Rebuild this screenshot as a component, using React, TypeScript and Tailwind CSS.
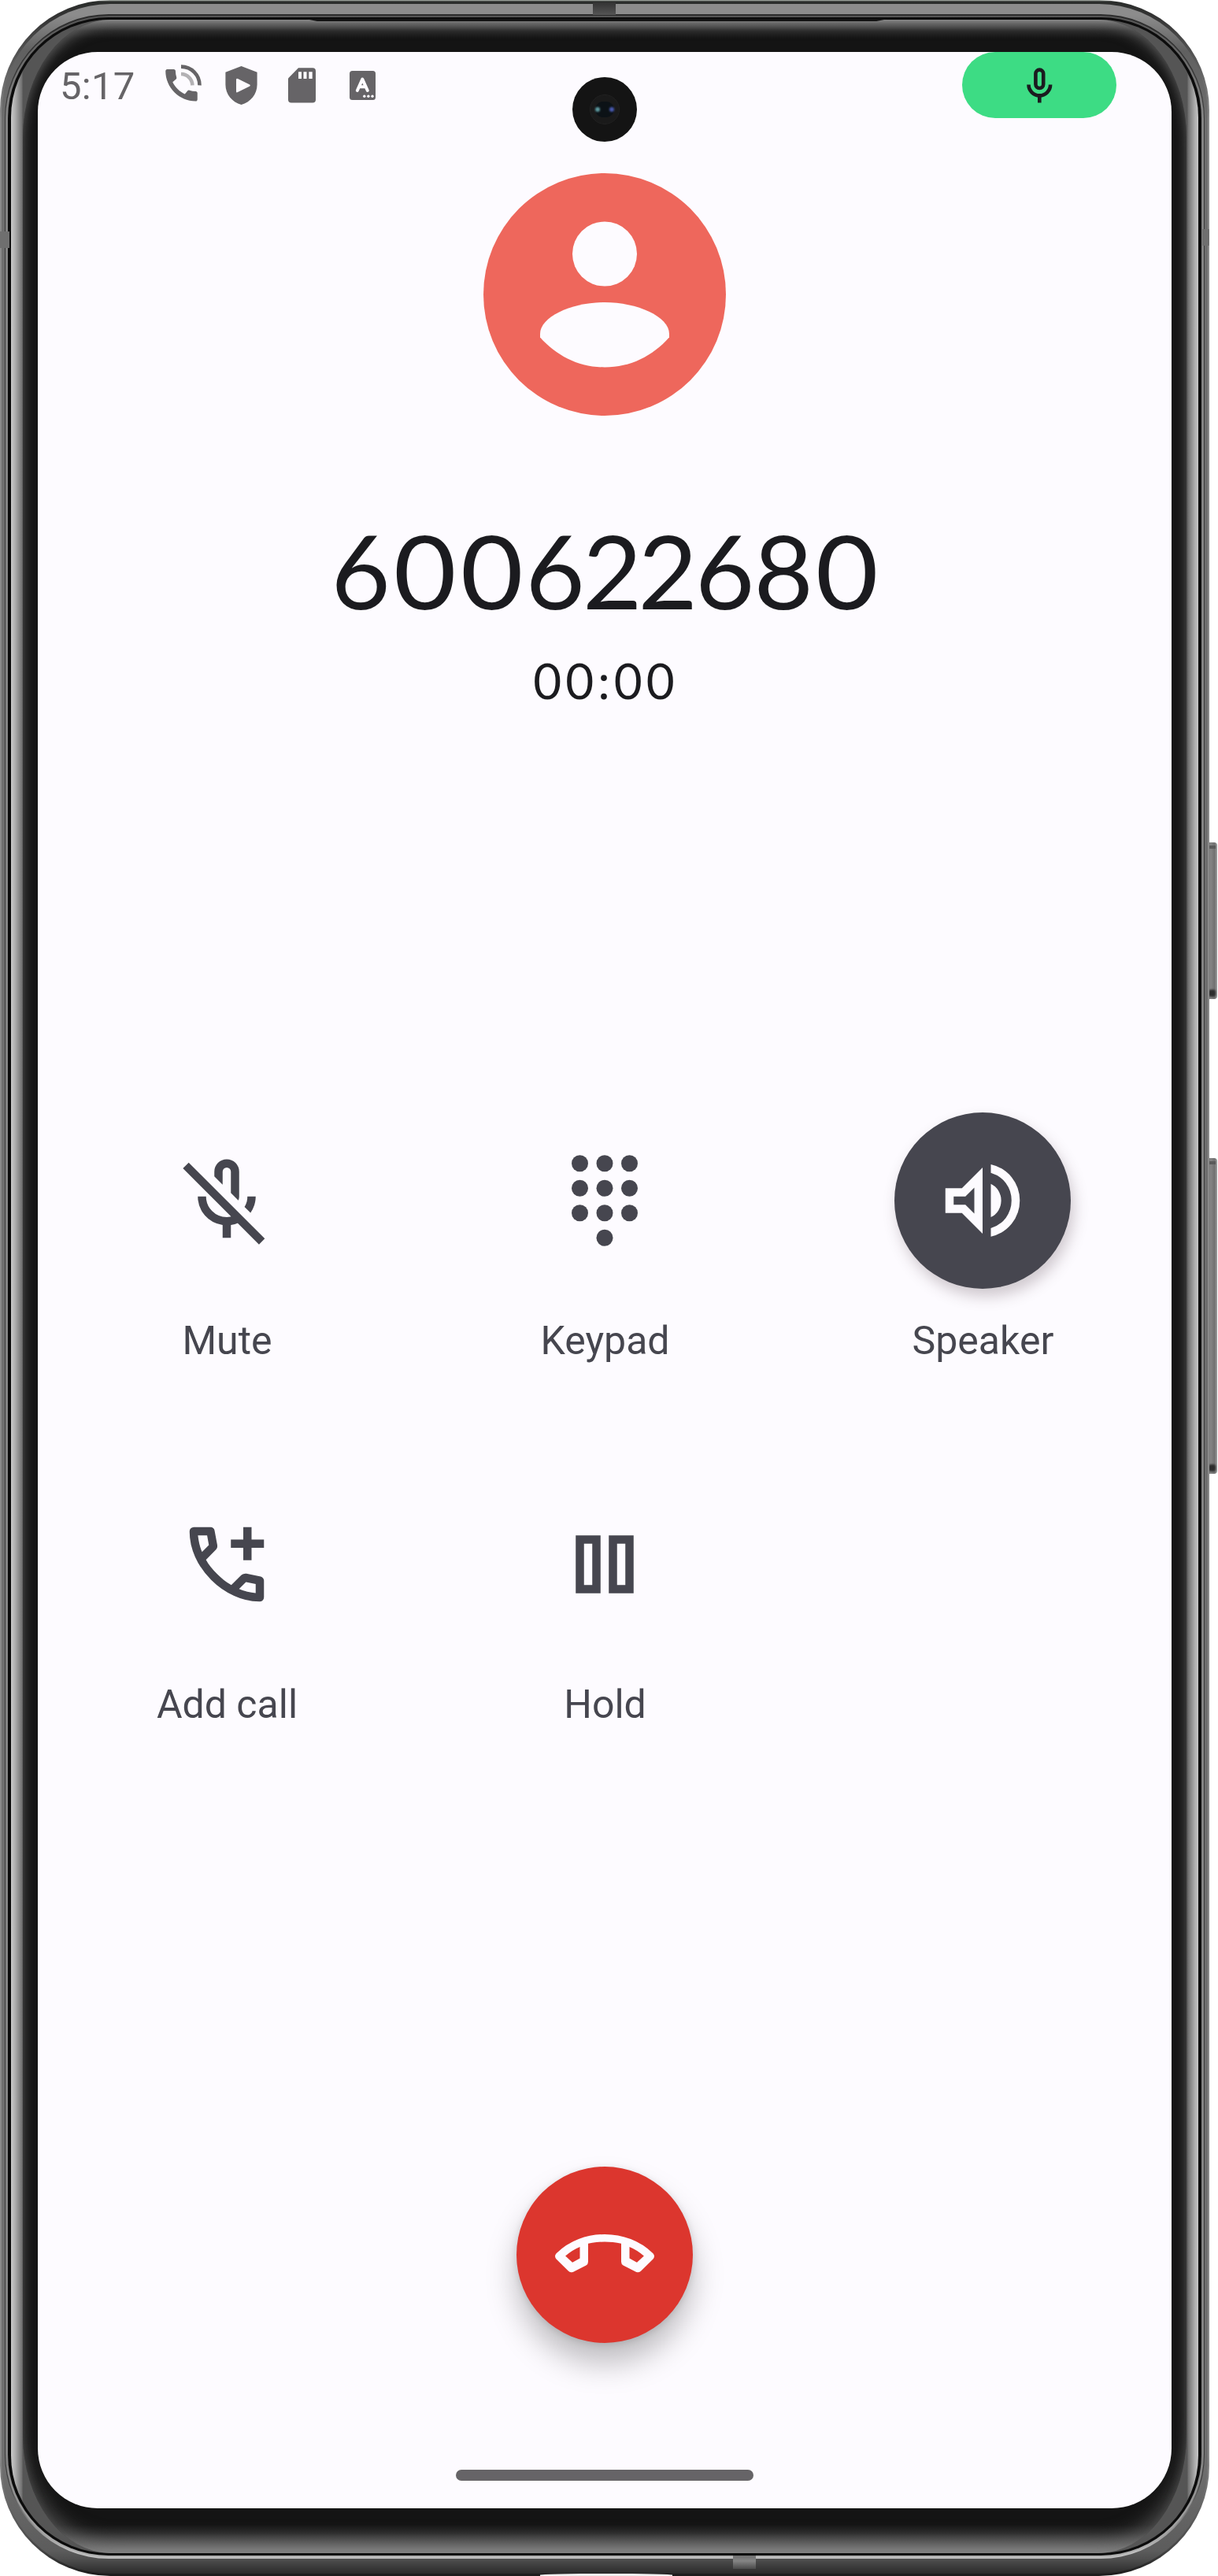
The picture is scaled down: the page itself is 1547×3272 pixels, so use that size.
import type { ReactNode } from "react";

/* ---------- status bar icons ---------- */

function OngoingCallIcon() {
  return (
    <svg className="h-[48px] w-[50px]" viewBox="0 0 50 48">
      <g transform="translate(-5.5 -.7) scale(2.25)" fill="#666467">
        <path d="M20.01 15.38c-1.23 0-2.42-.2-3.53-.56-.35-.12-.74-.03-1.01.24l-1.57 1.97c-2.83-1.35-5.48-3.9-6.89-6.83l1.95-1.66c.27-.28.35-.67.24-1.02-.37-1.11-.56-2.3-.56-3.53 0-.54-.45-.99-.99-.99H4.19C3.65 3 3 3.24 3 3.99 3 13.28 10.73 21 20.01 21c.71 0 .99-.63.99-1.18v-3.45c0-.54-.45-.99-.99-.99z" />
      </g>
      <path d="M21 2.6A23.5 23.5 0 0 1 44.5 26.4" fill="none" stroke="#666467" strokeWidth="4.6" />
      <path d="M21 12A14.6 14.6 0 0 1 35.4 26.4" fill="none" stroke="#b3b1b4" strokeWidth="4.6" />
    </svg>
  );
}

function ShieldPlayIcon() {
  return (
    <svg className="h-[49px] w-[41px]" viewBox="0 0 41 49" fill="#666467">
      <path
        fillRule="evenodd"
        d="M20.5 0L40.6 7.8V23.5C40.6 36 32 45.8 20.5 49C9 45.8.4 36 .4 23.5V7.8ZM14 17.2V32Q14 34.3 16 33.1L31.2 25.4Q32.6 24.5 31.2 23.6L16 16Q14 15 14 17.2Z"
      />
    </svg>
  );
}

function SdCardIcon() {
  return (
    <svg className="h-[45px] w-[35px]" viewBox="0 0 35 45">
      <path d="M13 .3H31Q35 .3 35 4.3V40.5Q35 44.5 31 44.5H4Q0 44.5 0 40.5V13.5Z" fill="#666467" />
      <path d="M13 5.3h4v8.7h-4zM19.5 5.3h4v8.7h-4zM26.3 5.3h4.4v8.7h-4.4z" fill="#fdfbff" />
    </svg>
  );
}

function LanguageIcon() {
  return (
    <svg className="h-[37px] w-[33px]" viewBox="0 0 33 37">
      <rect width="33" height="37" rx="3.5" fill="#666467" />
      <path
        d="M9.8 25L16.3 10.6L22.8 25M12.5 20.3H20"
        fill="none"
        stroke="#fdfbff"
        strokeWidth="4"
        strokeLinecap="round"
        strokeLinejoin="round"
      />
      <g fill="#fdfbff">
        <circle cx="18.8" cy="32.3" r="1.7" />
        <circle cx="23.9" cy="32.3" r="1.7" />
        <circle cx="29" cy="32.3" r="1.7" />
      </g>
    </svg>
  );
}

function MicIcon() {
  return (
    <svg className="h-[45px] w-[33px]" viewBox="0 0 33 45" fill="none" stroke="#1b1b1f" strokeWidth="4.6">
      <rect x="11.4" y="2.6" width="9.8" height="23.4" rx="4.9" />
      <path d="M2.5 21.5A13.8 13.8 0 0 0 30.1 21.5" />
      <path d="M16.3 35V44.6" />
    </svg>
  );
}

/* ---------- call control icons (24 unit grid) ---------- */

function Icon({ children }: { children: ReactNode }) {
  return (
    <svg className="size-[126px]" viewBox="0 0 24 24" fill="currentColor">
      {children}
    </svg>
  );
}

const MuteIcon = () => (
  <Icon>
    <path d="m17.75 14.95-1.45-1.45q.35-.525.525-1.163Q17 11.7 17 11h2q0 1.1-.325 2.087-.325.988-.925 1.863Zm-2.95-3L13 10.15V5q0-.425-.287-.713Q12.425 4 12 4t-.712.287Q11 4.575 11 5v3.15l-2-2V5q0-1.25.875-2.125T12 2q1.25 0 2.125.875T15 5v6q0 .275-.062.512-.063.238-.138.438ZM11 21v-3.1q-2.6-.35-4.3-2.312Q5 13.625 5 11h2q0 2.075 1.463 3.537Q9.925 16 12 16q.85 0 1.613-.262.762-.263 1.387-.738l1.425 1.425q-.725.575-1.587.962-.863.388-1.838.513V21Zm8.8 1.6L1.4 4.2l1.4-1.4 18.4 18.4Z" />
  </Icon>
);

const KeypadIcon = () => (
  <Icon>
    {[3, 9, 15].map((y) => [6, 12, 18].map((x) => <circle key={`${x}-${y}`} cx={x} cy={y} r="2" />))}
    <circle cx="12" cy="21" r="2" />
  </Icon>
);

const SpeakerIcon = () => (
  <Icon>
    <path d="M14 20.725v-2.05q2.25-.65 3.625-2.5t1.375-4.2q0-2.35-1.375-4.2T14 5.275v-2.05q3.1.7 5.05 3.138Q21 8.8 21 11.975t-1.95 5.613Q17.1 20.025 14 20.725Zm0-4.725V7.95q1.175.55 1.838 1.65.662 1.1.662 2.4 0 1.275-.662 2.362Q15.175 15.45 14 16Z" />
    <path fillRule="evenodd" d="M3 15V9h4l5-5v16l-5-5ZM10 8.85 7.85 11H5v2h2.85L10 15.15Z" />
  </Icon>
);

const AddCallIcon = () => (
  <Icon>
    <path d="M16 11V8h-3V6h3V3h2v3h3v2h-3v3Z" />
    <path
      fillRule="evenodd"
      d="M19.95 21q-3.125 0-6.175-1.363-3.05-1.362-5.55-3.862-2.5-2.5-3.863-5.55Q3 7.175 3 4.05q0-.45.3-.75t.75-.3H8.1q.35 0 .625.238.275.237.325.562l.65 3.5q.05.4-.025.675-.075.275-.275.475L6.975 10.9q.5.925 1.187 1.787.688.863 1.513 1.663.775.775 1.625 1.438.85.662 1.8 1.212l2.35-2.35q.225-.225.588-.338.362-.112.712-.062l3.45.7q.35.1.575.363.225.262.225.587v4.05q0 .45-.3.75t-.75.3ZM6.025 9l1.65-1.65L7.25 5H5.025q.125 1.025.35 2.025.225 1 .65 1.975Zm8.95 8.95q.975.425 1.988.675 1.012.25 2.037.325v-2.2l-2.35-.475Z"
    />
  </Icon>
);

const HoldIcon = () => (
  <Icon>
    <path fillRule="evenodd" d="M5 5h6v14H5ZM7 7v10h2V7ZM13 5h6v14h-6ZM15 7v10h2V7Z" />
  </Icon>
);

const EndCallIcon = () => (
  <Icon>
    <path
      fillRule="evenodd"
      d="M12 7.05Q15.3 7.05 18.3 8.2T23.7 11.65Q24 11.95 24 12.35T23.7 13.05L20.8 15.9Q20.5 16.2 20.1 16.22T19.4 16.05L16.5 14.55Q16 14.25 16 13.7V9.3Q15 9.05 14 8.95T12 8.85T10 8.95T8 9.3V13.7Q8 14.25 7.5 14.55L4.6 16.05Q4.3 16.25 3.9 16.22T3.2 15.9L.3 13.05Q0 12.75 0 12.35T.3 11.65Q2.7 9.35 5.7 8.2T12 7.05ZM18 10.1V12.85L19.8 13.85L21.5 12.3Q20.7 11.6 19.85 11.05T18 10.1ZM6 10.1Q5 10.5 4.15 11.05T2.5 12.3L4.2 13.85L6 12.85Z"
    />
  </Icon>
);

function Avatar() {
  return (
    <svg className="size-[308px]" viewBox="0 0 308 308">
      <circle cx="154" cy="154" r="154" fill="#ee675c" />
      <circle cx="154" cy="102.5" r="41" fill="#fdfbff" />
      <path
        d="M72 208.5V204C72 182 113 164 154 164S236 182 236 204V208.5C215 232 187 246.5 154 246.5S93 232 72 208.5Z"
        fill="#fdfbff"
      />
    </svg>
  );
}

function Control({ icon, label, active }: { icon: ReactNode; label: string; active?: boolean }) {
  return (
    <button className="flex flex-col items-center">
      <span
        className={
          active
            ? "flex size-[224px] items-center justify-center rounded-full bg-[#46464f] text-[#fdfbff] shadow-[4px_10px_18px_rgba(70,50,60,0.25)]"
            : "flex size-[224px] items-center justify-center rounded-full text-[#46464f]"
        }
      >
        {icon}
      </span>
      <span className="mt-9 pl-px text-[50px] leading-[60px] text-[#46464f]">{label}</span>
    </button>
  );
}

function Screen() {
  return (
    <main className="relative flex h-[3120px] w-[1440px] flex-col items-center overflow-hidden rounded-[76px] bg-[#fdfbff] font-['Roboto',sans-serif]">
      <header className="flex h-[84px] w-full items-start text-[#666467]">
        <span className="ml-[28px] mt-[15px] w-[96px] text-[49px] leading-[58px] tracking-[0.3px]">5:17</span>
        <span className="ml-[36.5px] mt-[15.5px]"><OngoingCallIcon /></span>
        <span className="ml-[27.5px] mt-[18px]"><ShieldPlayIcon /></span>
        <span className="ml-[39px] mt-[20px]"><SdCardIcon /></span>
        <span className="ml-[43px] mt-[24px]"><LanguageIcon /></span>
        <span className="ml-auto mr-[70px] flex h-[84px] w-[196px] items-center justify-center rounded-full bg-[#3ddc84]">
          <MicIcon />
        </span>
      </header>

      {/* front camera */}
      <div className="absolute left-[679px] top-[32px] flex size-[82px] items-center justify-center rounded-full bg-[#141414]">
        <div className="flex size-[38px] items-center justify-center rounded-full border border-[#222] bg-[#1a1a1a]">
          <div className="flex h-[20px] w-[24px] items-center justify-between rounded-full bg-[#0c1216]">
            <span className="size-[6px] rounded-full bg-[#5f9ba0] blur-[1px]" />
            <span className="size-[6px] rounded-full bg-[#4a5bb0] blur-[1px]" />
          </div>
        </div>
      </div>

      <div className="mt-[70px]"><Avatar /></div>

      <h1 className="mt-[118px] flex whitespace-nowrap pr-[2px] font-['Lato',sans-serif] text-[130px] leading-[156px] text-[#1b1b1f]">
        <span className="mr-[5.6px]">6</span>
        <span className="mr-[10.4px] scale-x-[1.06]">0</span>
        <span className="mr-[4.7px] scale-x-[1.06]">0</span>
        <span className="-mr-[2.8px]">6</span>
        <span className="-mr-[5px]">2</span>
        <span className="-mr-[3px]">2</span>
        <span className="-mr-[0.7px]">6</span>
        <span className="mr-[5px]">8</span>
        <span className="scale-x-[1.06]">0</span>
      </h1>
      <p className="mt-[25px] pl-[3px] font-['Lato',sans-serif] text-[62px] leading-[74px] tracking-[5px] text-[#1b1b1f]">00:00</p>

      <section className="mt-[512px] grid w-full grid-cols-3 gap-y-[142px]">
        <Control icon={<MuteIcon />} label="Mute" />
        <Control icon={<KeypadIcon />} label="Keypad" />
        <Control icon={<SpeakerIcon />} label="Speaker" active />
        <Control icon={<AddCallIcon />} label="Add call" />
        <Control icon={<HoldIcon />} label="Hold" />
      </section>

      <button className="mt-[557px] flex size-[224px] shrink-0 items-center justify-center rounded-full bg-[#dc362e] text-[#fdfbff] shadow-[0_26px_38px_rgba(0,0,0,0.25),0_2px_10px_rgba(0,0,0,0.12)]">
        <EndCallIcon />
      </button>
      <div className="mt-[161px] h-[14px] w-[378px] shrink-0 rounded-full bg-[#666467]" />
    </main>
  );
}

function SideKey({ className }: { className: string }) {
  return (
    <div
      className={`absolute left-[1533px] w-[13px] rounded-r-[4px] bg-[linear-gradient(to_right,#5a5a5a,#858585_35%,#707070_75%,#a0a0a0)] ${className}`}
    >
      <div className="absolute inset-x-[2px] top-[4px] h-[4px] bg-[#5a5a5a]" />
      <div className="absolute inset-x-[2px] bottom-[3px] h-[9px] rounded-[3px] bg-[#2c2c2c] blur-[1px]" />
    </div>
  );
}

export default function App() {
  return (
    <div className="relative h-[3272px] w-[1547px] overflow-hidden bg-white">
      <SideKey className="top-[1070px] h-[199px]" />
      <SideKey className="top-[1471px] h-[401px]" />

      {/* metal frame, built from nested rings */}
      <div className="relative h-[3272px] w-[1536px] rounded-[140px] bg-[linear-gradient(to_bottom,#b9c1b9_0,#2a2d2b_2px,#333_20px,#8a8a8a_150px,#8a8a8a_3120px,#444_3240px,#1c1c1c_3270px)] px-[2px] pb-[3px] pt-[5px]">
        <div className="h-full rounded-[138px] bg-[linear-gradient(to_bottom,#8c8c8c_0,#8c8c8c_14px,#606060_60px,#6e6e6e_150px,#6e6e6e_3130px,#5c5c5c_3235px,#505050_3245px,#2a2a2a_3264px)] px-[4px] pb-[19px] pt-[13px]">
          <div className="h-full rounded-[132px] bg-[linear-gradient(to_bottom,#2c2c2c_0,#3a3a3a_100px,#3a3a3a_3130px,#c0c0c0_3225px,#c0c0c0_100%)] px-[1px] pb-[2px] pt-[2px]">
            <div className="h-full rounded-[131px] bg-[linear-gradient(to_bottom,#555_0,#848484_120px,#848484_3110px,#b0b0b0_100%)] px-[3px] pb-[2px] pt-[2px]">
              <div className="h-full rounded-[128px] bg-[#0c0c0c] px-[4px] pb-[3px] pt-[3px]">
                <div className="h-full rounded-[124px] bg-[linear-gradient(to_right,#cacaca_0,#b0b0b0_5px,#707070_14px,#555_15px,#555_1494px,#707070_1495px,#b0b0b0_1504px,#cacaca_1509px)] px-[15px]">
                  <div className="h-full rounded-[112px/150px] bg-[linear-gradient(to_bottom,#808080_0,#505050_5px,#222_14px,#141414_24px,#141414_3182px,#262626_3192px,#505050_3205px,#808080_3217px)] pl-[19px] pt-[41px] shadow-[inset_0_12px_16px_-4px_rgba(140,140,140,0.55),inset_0_-20px_24px_-6px_rgba(130,130,130,0.55)]">
                    <Screen />
                  </div>
                </div>
              </div>
            </div>
          </div>
        </div>
      </div>

      {/* earpiece lip and antenna breaks */}
      <div className="absolute left-[388px] top-[24px] h-[3px] w-[740px] bg-[#141414] [clip-path:polygon(0_0,100%_0,98%_100%,2%_100%)]" />
      <div className="absolute left-[753px] top-[3px] h-[16px] w-[29px] bg-[linear-gradient(to_bottom,#333,#555)]" />
      <div className="absolute left-[931px] top-[3246px] h-[17px] w-[29px] bg-[linear-gradient(to_bottom,#6e6e6e,#858585_40%,#4a4a4a)]" />
      <div className="absolute left-[0px] top-[294px] h-[21px] w-[12px] bg-[#6f6f6f]" />
      <div className="absolute left-[1527px] top-[291px] h-[21px] w-[9px] bg-[#6f6f6f]" />
      <div className="absolute left-[686px] top-[3269px] h-[3px] w-[168px] rounded-t-[100%] bg-[#f2f2f2]" />
    </div>
  );
}
